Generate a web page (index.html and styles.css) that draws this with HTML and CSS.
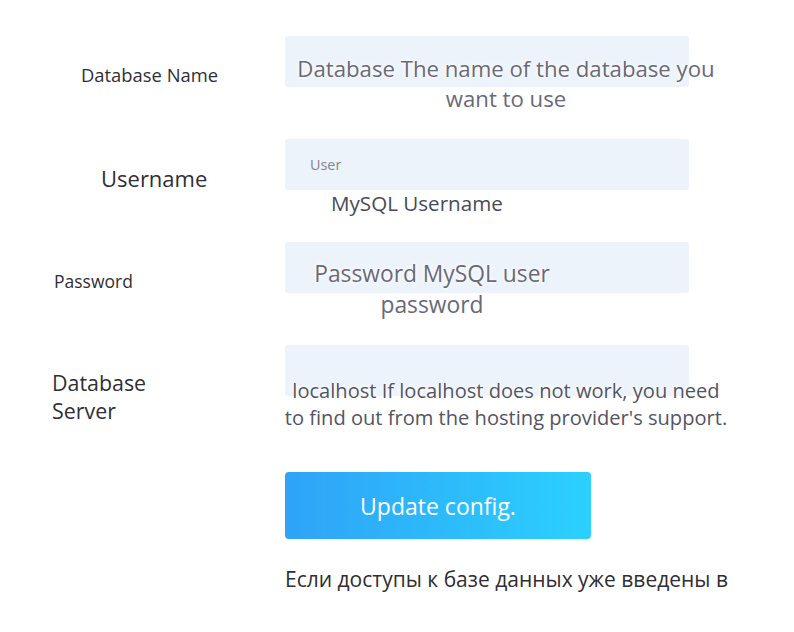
FILE: index.html
```html
<!DOCTYPE html>
<html lang="en">
<head>
<meta charset="utf-8">
<title>Database config</title>
<link rel="stylesheet" href="styles.css">
</head>
<body>
<form class="form">
  <div class="row">
    <label class="label label-name">Database Name</label>
    <div class="field">
      <div class="input"></div>
      <div class="help help-name">Database The name of the database you want to use</div>
    </div>
  </div>
  <div class="row">
    <label class="label label-user">Username</label>
    <div class="field">
      <div class="input"><span class="placeholder">User</span></div>
      <div class="help help-user">MySQL Username</div>
    </div>
  </div>
  <div class="row">
    <label class="label label-pass">Password</label>
    <div class="field">
      <div class="input"></div>
      <div class="help help-pass">Password MySQL user password</div>
    </div>
  </div>
  <div class="row">
    <label class="label label-server">Database Server</label>
    <div class="field">
      <div class="input"></div>
      <div class="help help-server">localhost If localhost does not work, you need to find out from the hosting provider's support.</div>
    </div>
  </div>
  <div class="actions">
    <button type="button" class="button">Update config.</button>
    <p class="note">Если доступы к базе данных уже введены в</p>
  </div>
</form>
</body>
</html>
```
FILE: styles.css
```css
html, body {
  margin: 0;
  padding: 0;
  background: #ffffff;
}
body {
  font-family: "Open Sans", "Noto Sans", sans-serif;
  color: #333338;
  padding-top: 36px;
}
.form {
  display: flex;
  flex-direction: column;
}
.row {
  display: grid;
  grid-template-columns: 285px 404px;
  height: 103px;
}
.label {
  display: block;
  color: #2f2f35;
}
.label-name {
  font-size: 18.4px;
  line-height: 24px;
  padding-top: 27px;
  padding-left: 81px;
}
.label-user {
  font-size: 22px;
  line-height: 30px;
  padding-top: 24px;
  padding-left: 101px;
}
.label-pass {
  font-size: 17.5px;
  line-height: 24px;
  padding-top: 27px;
  padding-left: 54px;
}
.label-server {
  font-size: 21.4px;
  line-height: 28px;
  padding-top: 24px;
  padding-left: 52px;
  width: 120px;
}
.field {
  display: flex;
  flex-direction: column;
}
.input {
  height: 51px;
  background: #ecf3fb;
  border-radius: 3px;
  display: flex;
  align-items: center;
  padding-left: 25px;
}
.placeholder {
  font-size: 14.4px;
  color: #85858f;
}
.help {
  color: #6a6a76;
  text-shadow: 0 0 2px #fff, 0 0 4px #fff, 0 0 6px #f4f8fd;
  text-align: center;
}
.help-name {
  font-size: 22.2px;
  line-height: 30px;
  margin-top: -33px;
  width: 442px;
}
.help-user {
  font-size: 20.6px;
  line-height: 26px;
  margin-top: 0;
  text-align: left;
  padding-left: 46px;
  color: #4a4a55;
}
.help-pass {
  font-size: 22.8px;
  line-height: 31px;
  margin-top: -35px;
  width: 294px;
}
.help-server {
  font-size: 20.1px;
  line-height: 27px;
  margin-top: -19px;
  margin-left: -2px;
  width: 446px;
  color: #55555f;
}
.actions {
  padding-left: 285px;
  padding-top: 24px;
  display: flex;
  flex-direction: column;
  align-items: flex-start;
}
.button {
  width: 306px;
  height: 67px;
  border: 0;
  border-radius: 4px;
  background: linear-gradient(90deg, #2fa3f7 0%, #2bd0fe 100%);
  color: #ffffff;
  font-family: "Open Sans", "Noto Sans", sans-serif;
  font-size: 23px;
  padding: 0;
}
.note {
  margin: 27px 0 0;
  font-size: 21px;
  line-height: 27px;
  color: #2e2e33;
}
```
